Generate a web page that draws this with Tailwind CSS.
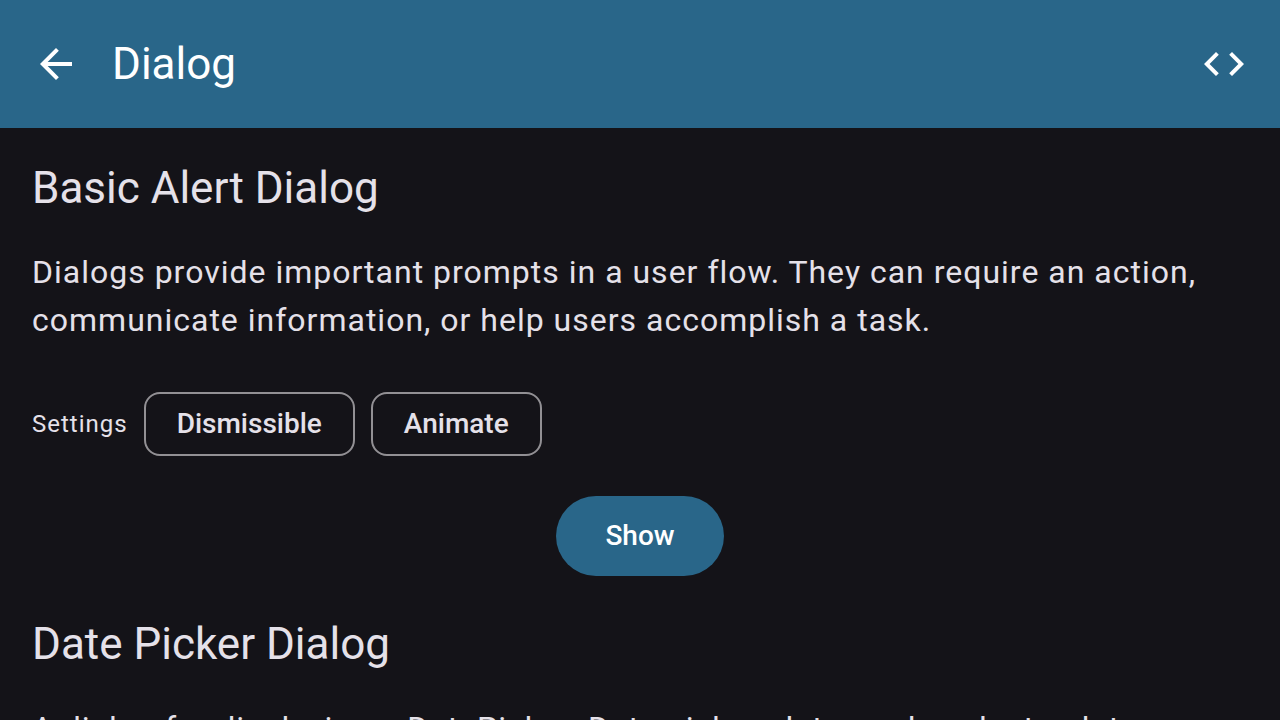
<!DOCTYPE html>
<html lang="en">
<head>
<meta charset="utf-8">
<meta name="viewport" content="width=device-width, initial-scale=1">
<title>Dialog</title>
<script src="https://cdn.jsdelivr.net/npm/@tailwindcss/browser@4"></script>
</head>
<body class="flex h-screen flex-col overflow-hidden bg-[#141318] font-['Roboto',sans-serif] text-[#e5e1e9]">
<header class="flex h-32 shrink-0 items-center bg-[#296689] px-8 text-white">
  <button type="button" aria-label="Back" class="size-12 shrink-0">
    <svg viewBox="0 0 24 24" class="size-12" fill="currentColor" aria-hidden="true"><path d="M20 11H7.83l5.59-5.59L12 4l-8 8 8 8 1.41-1.41L7.83 13H20v-2z"/></svg>
  </button>
  <h1 class="ml-8 flex-1 text-[44px] leading-14">Dialog</h1>
  <button type="button" aria-label="Source code" class="size-12 shrink-0">
    <svg viewBox="0 0 24 24" class="size-12" fill="currentColor" aria-hidden="true"><path d="M9.4 16.6 4.8 12l4.6-4.6L8 6l-6 6 6 6 1.4-1.4zm5.2 0 4.6-4.6-4.6-4.6L16 6l6 6-6 6-1.4-1.4z"/></svg>
  </button>
</header>
<main class="flex min-h-0 flex-1 flex-col gap-10 overflow-hidden p-8">
  <section class="flex shrink-0 flex-col">
    <h2 class="text-[44px] leading-14">Basic Alert Dialog</h2>
    <p class="mt-8 text-[32px] leading-12 tracking-[1px]">Dialogs provide important prompts in a user flow. They can require an action, communicate information, or help users accomplish a task.</p>
    <div class="mt-12 flex items-center gap-4">
      <span class="text-2xl tracking-[1px]">Settings</span>
      <button type="button" class="h-16 rounded-2xl border-2 border-[#929094] px-[31px] text-[28px] font-medium">Dismissible</button>
      <button type="button" class="h-16 rounded-2xl border-2 border-[#929094] px-[31px] text-[28px] font-medium">Animate</button>
    </div>
    <button type="button" class="mt-10 h-20 self-center rounded-full bg-[#296689] px-[49px] text-[28px] font-medium text-white">Show</button>
  </section>
  <section class="shrink-0">
    <h2 class="text-[44px] leading-14">Date Picker Dialog</h2>
    <p class="mt-8 text-[32px] leading-12 tracking-[1px]">A dialog for displaying a DatePicker. Date pickers let people select a date.</p>
  </section>
</main>
</body>
</html>
